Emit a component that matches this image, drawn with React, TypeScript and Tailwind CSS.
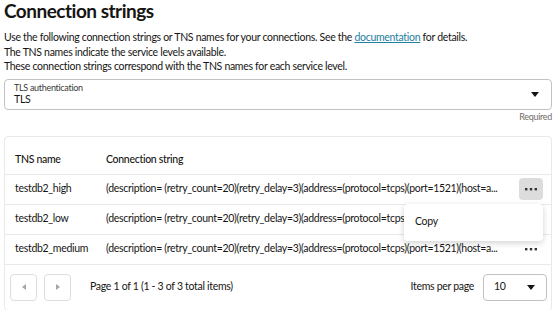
import { useState } from 'react'

const rows = [
    { name: 'testdb2_high', value: '(description= (retry_count=20)(retry_delay=3)(address=(protocol=tcps)(port=1521)(host=a...' },
    { name: 'testdb2_low', value: '(description= (retry_count=20)(retry_delay=3)(address=(protocol=tcps)(port=1521)(host=a...' },
    { name: 'testdb2_medium', value: '(description= (retry_count=20)(retry_delay=3)(address=(protocol=tcps)(port=1521)(host=a...' },
]

function Caret({ className = '' }: { className?: string }) {
    return (
        <svg width="8" height="5" viewBox="0 0 8 5" className={className}>
            <path d="M0 0h8L4 5z" fill="currentColor" />
        </svg>
    )
}

function Dots() {
    return (
        <svg width="12" height="3" viewBox="0 0 12 3">
            <rect x="0" y="0" width="2.4" height="2.4" fill="#333" />
            <rect x="4.8" y="0" width="2.4" height="2.4" fill="#333" />
            <rect x="9.6" y="0" width="2.4" height="2.4" fill="#333" />
        </svg>
    )
}

export default function App() {
    const [open] = useState(1)

    return (
        <div className="w-[555px] h-[310px] overflow-hidden bg-white px-1 text-[#161513] tracking-[-0.3px]" style={{ fontFamily: 'Lato, "Open Sans", sans-serif' }}>
            <h1 className="text-[19px] font-bold leading-[22px] tracking-[-0.5px]">Connection strings</h1>

            <div className="mt-[8px] text-[10.5px] leading-[14.5px] text-[#161513]">
                <p>
                    Use the following connection strings or TNS names for your connections. See the{' '}
                    <span className="text-[#227e9e] underline">documentation</span> for details.
                </p>
                <p>The TNS names indicate the service levels available.</p>
                <p>These connection strings correspond with the TNS names for each service level.</p>
            </div>

            <div className="mt-[5px] w-[548px] h-[31px] rounded border border-[#c4c2bf] flex items-center pl-[9px] pr-[12px]">
                <div className="flex-1 flex flex-col">
                    <span className="text-[9px] leading-[11px] text-[#3a3936]">TLS authentication</span>
                    <span className="text-[10.5px] leading-[13px]">TLS</span>
                </div>
                <Caret className="text-[#161513]" />
            </div>
            <div className="w-[548px] text-right text-[9px] leading-[12px] text-[#6f6c69] mt-[1px]">Required</div>

            <div className="relative mt-[13px] w-[548px] rounded border border-[#ebe9e6]">
                <div className="flex items-end h-[38px] pb-[6px] border-b border-[#ebe9e6] text-[10.5px] font-medium">
                    <span className="w-[101px] pl-[10px]">TNS name</span>
                    <span>Connection string</span>
                </div>
                {rows.map((r, i) => (
                    <div key={r.name} className="flex items-center h-[30px] border-b border-[#ebe9e6] text-[10.5px] text-[#161513]">
                        <span className="w-[101px] pl-[10px] shrink-0">{r.name}</span>
                        <span className="flex-1 whitespace-nowrap overflow-hidden">{r.value}</span>
                        <div className={`w-[24px] h-[22px] mr-[8px] ml-[7px] rounded flex items-center justify-center ${i === 0 ? 'bg-[#dcdcdc]' : ''}`}>
                            <Dots />
                        </div>
                    </div>
                ))}
                <div className="flex items-center h-[45px] pl-[5px] pr-[4px] text-[10.5px]">
                    <button className="w-[27px] h-[27px] rounded border border-[#e0dedb] flex items-center justify-center text-[#a9a7a4]">
                        <svg width="4" height="6" viewBox="0 0 4 6"><path d="M4 0v6L0 3z" fill="currentColor" /></svg>
                    </button>
                    <button className="ml-[7px] w-[27px] h-[27px] rounded border border-[#e0dedb] flex items-center justify-center text-[#a9a7a4]">
                        <svg width="4" height="6" viewBox="0 0 4 6"><path d="M0 0v6l4-3z" fill="currentColor" /></svg>
                    </button>
                    <span className="ml-[19px]">Page 1 of 1 (1 - 3 of 3 total items)</span>
                    <span className="ml-auto mr-[9px]">Items per page</span>
                    <div className="w-[64px] h-[27px] rounded border border-[#c4c2bf] flex items-center pl-[10px] pr-[11px]">
                        <span className="flex-1">10</span>
                        <Caret />
                    </div>
                </div>

                {open === 1 && (
                    <div className="absolute left-[399px] top-[67px] w-[139px] h-[37px] bg-white rounded shadow-[0_2px_6px_rgba(0,0,0,0.18)] flex items-center pl-[11px] text-[10.5px]">
                        Copy
                    </div>
                )}
            </div>
        </div>
    )
}
